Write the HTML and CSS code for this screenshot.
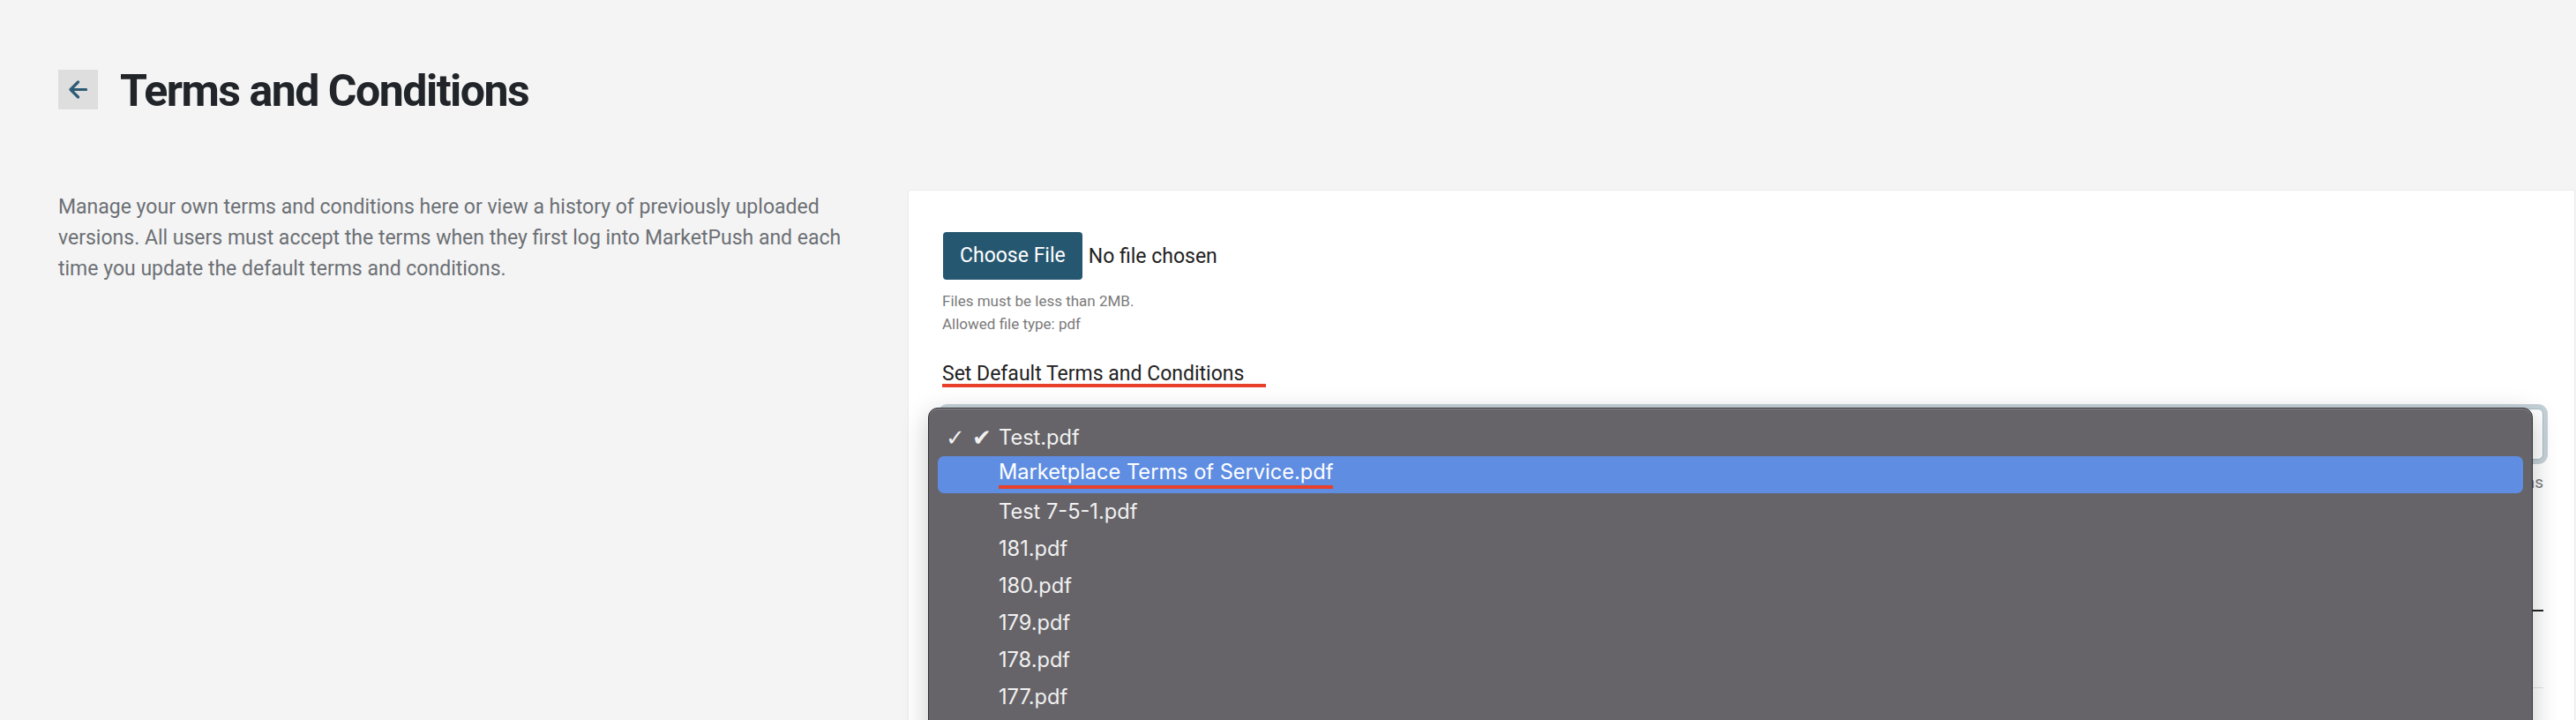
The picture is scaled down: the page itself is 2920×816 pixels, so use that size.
FILE: index.html
```html
<!DOCTYPE html>
<html lang="en">
<head>
<meta charset="utf-8">
<title>Terms and Conditions</title>
<link rel="stylesheet" href="styles.css">
</head>
<body>
<div class="page">
  <header class="page-head">
    <button class="back-btn" type="button" aria-label="Back">
      <svg width="21" height="21" viewBox="0 0 21 21" aria-hidden="true">
        <path d="M19.5 10.5H2 M10.5 2 L2 10.5 L10.5 19" fill="none" stroke="#2c5c76" stroke-width="3.2" stroke-linecap="round" stroke-linejoin="round"/>
      </svg>
    </button>
    <h1 class="page-title">Terms and Conditions</h1>
  </header>

  <div class="layout">
    <aside class="intro">
      <p>Manage your own terms and conditions here or view a history of previously uploaded<br>versions. All users must accept the terms when they first log into MarketPush and each<br>time you update the default terms and conditions.</p>
    </aside>

    <section class="card">
      <div class="file-row">
        <span class="file-btn">Choose File</span>
        <span class="file-name">No file chosen</span>
      </div>
      <p class="hint">Files must be less than 2MB.<br>Allowed file type: pdf</p>

      <div class="field-label"><span class="marked">Set Default Terms and Conditions</span></div>

      <div class="select-wrap">
        <div class="select"></div>
        <ul class="menu">
          <li class="menu-item"><span class="menu-check">✓ ✔</span><span class="menu-label">Test.pdf</span></li>
          <li class="menu-item is-active"><span class="menu-check"></span><span class="menu-label"><span class="marked-menu">Marketplace Terms of Service.pdf</span></span></li>
          <li class="menu-item"><span class="menu-check"></span><span class="menu-label">Test 7-5-1.pdf</span></li>
          <li class="menu-item"><span class="menu-check"></span><span class="menu-label">181.pdf</span></li>
          <li class="menu-item"><span class="menu-check"></span><span class="menu-label">180.pdf</span></li>
          <li class="menu-item"><span class="menu-check"></span><span class="menu-label">179.pdf</span></li>
          <li class="menu-item"><span class="menu-check"></span><span class="menu-label">178.pdf</span></li>
          <li class="menu-item"><span class="menu-check"></span><span class="menu-label">177.pdf</span></li>
        </ul>
      </div>
      <p class="hint hint-right">Terms</p>

      <div class="history">
        <div class="history-head"></div>
        <div class="history-row"></div>
      </div>
    </section>
  </div>
</div>
</body>
</html>
```

FILE: styles.css
```css
html, body {
  margin: 0;
  padding: 0;
  overflow: hidden;
}

body {
  background: #f4f4f4;
  font-family: Roboto, "Liberation Sans", sans-serif;
  color: #222;
}

.page {
  padding: 79px 2px 0 66px;
}

.page-head {
  display: flex;
  align-items: flex-start;
  gap: 25px;
}

.back-btn {
  width: 45px;
  height: 45px;
  padding: 0;
  border: 0;
  background: #dedede;
  display: flex;
  align-items: center;
  justify-content: center;
}

.page-title {
  margin: 0;
  padding-top: 2px;
  font-size: 50px;
  line-height: 45px;
  font-weight: 700;
  letter-spacing: -1.5px;
  color: #212529;
}

.layout {
  margin-top: 90px;
  display: grid;
  grid-template-columns: 900px 1fr;
  column-gap: 64px;
}

.intro p {
  margin: 0;
  padding-top: 1px;
  font-size: 23px;
  line-height: 35px;
  color: #6c7075;
}

.card {
  background: #fff;
  box-shadow: 0 0 0 1px #ececec, 0 1px 3px rgba(0, 0, 0, 0.04);
  border-radius: 3px 0 0 0;
  padding: 47px 35px 0 38px;
  height: 700px;
}

.file-row {
  display: flex;
  align-items: center;
}

.file-btn {
  height: 54px;
  padding: 0 19px;
  margin-left: 1px;
  border-radius: 4px;
  background: #265771;
  color: #fff;
  font-size: 23px;
  line-height: 54px;
}

.file-name {
  margin-left: 7px;
  font-size: 23px;
  color: #222;
}

.hint {
  margin: 11px 0 0;
  font-size: 17px;
  line-height: 26px;
  color: #7a7a7a;
}

.field-label {
  margin-top: 33px;
  font-size: 23px;
  line-height: 22px;
  color: #222;
}

.marked {
  display: inline-block;
  padding-right: 25px;
  border-bottom: 4px solid #e8402a;
}

.select-wrap {
  position: relative;
  margin-top: 24px;
}

.select {
  height: 56px;
  border: 1px solid #a9bdc9;
  border-radius: 6px;
  box-shadow: 0 0 0 5px #c5d1d8;
  background: #fff;
}

.menu {
  position: absolute;
  left: -16px;
  top: -1px;
  width: 1819px;
  height: 400px;
  box-sizing: border-box;
  margin: 0;
  padding: 12px 10px 0;
  list-style: none;
  background: #666469;
  border: 1px solid #2e2d30;
  border-radius: 11px;
  box-shadow: inset 0 1px 0 #8c8a8f, 0 8px 30px rgba(0, 0, 0, 0.22);
  font-family: Inter, Roboto, sans-serif;
  font-size: 23.6px;
  color: #f1f1f1;
  z-index: 2;
}

.menu-item {
  display: flex;
  align-items: center;
  height: 42px;
  padding-left: 9px;
  border-radius: 7px;
}

.menu-item.is-active {
  background: #5e8de2;
  color: #fff;
}

.menu-check {
  width: 60px;
  flex: none;
  font-family: "DejaVu Sans", sans-serif;
  font-size: 26px;
  color: #f1f1f1;
  white-space: pre;
}

.menu-label {
  line-height: 24px;
}

.marked-menu {
  display: inline-block;
  padding-bottom: 3px;
  border-bottom: 4px solid #e8402a;
}

.hint-right {
  margin-top: 13px;
  text-align: right;
  font-size: 19px;
}

.history {
  margin-top: 40px;
}

.history-head {
  height: 91px;
  border-bottom: 2px solid #222;
}

.history-row {
  height: 86px;
  border-bottom: 1px solid #e2e2e2;
}
```
